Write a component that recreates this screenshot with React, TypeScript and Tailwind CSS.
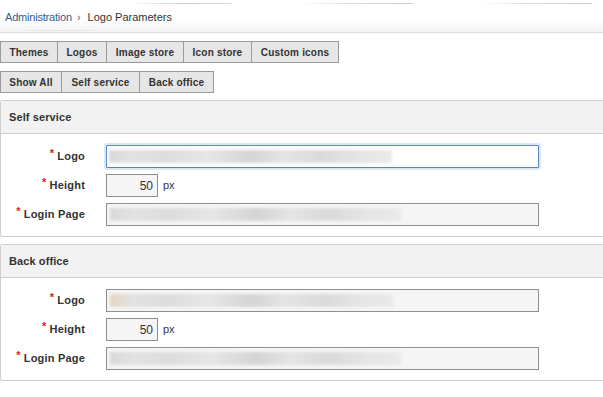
import React from 'react';

const tabs: [string, number][] = [
  ['Themes', 58],
  ['Logos', 50],
  ['Image store', 78],
  ['Icon store', 69],
  ['Custom icons', 88],
];
const filters: [string, number][] = [
  ['Show All', 62],
  ['Self service', 79],
  ['Back office', 75],
];

const Blur: React.FC<{ w: number; tint?: string }> = ({ w, tint }) => (
  <div
    className="h-[13px] blur-[1.5px]"
    style={{
      width: w,
      background: `linear-gradient(90deg, ${tint || '#d8d8d8'} 0%, #e2e2e2 8%, #dcdcdc 20%, #e6e6e6 35%, #d4d4d4 50%, #e4e4e4 62%, #dadada 75%, #e6e6e6 90%, #e9e9e9 100%)`,
    }}
  />
);

const Field: React.FC<{ label: string; children: React.ReactNode }> = ({ label, children }) => (
  <div className="flex items-center h-[23px]">
    <div className="w-[84px] text-right text-[11px] font-bold text-[#333] tracking-[0.2px]">
      <span className="text-[#e02020] text-[11px] relative -top-[3px] mr-[3px]">*</span>
      {label}
    </div>
    <div className="ml-[21px] flex items-center h-full">{children}</div>
  </div>
);

const Section: React.FC<{ title: string; focused?: boolean; logoTint?: string }> = ({ title, focused, logoTint }) => (
  <div className="border border-[#cfcfcf] border-r-0 rounded-l-[3px] w-[610px]">
    <div className="h-[33px] bg-[#f2f2f2] border-b border-[#cfcfcf] flex items-center pl-[8px] text-[11px] font-bold text-[#333] tracking-[0.1px]">
      {title}
    </div>
    <div className="pt-[11px] pb-[10px] flex flex-col gap-[6px]">
      <Field label="Logo">
        <div
          className={
            focused
              ? 'w-[433px] h-[23px] border border-[#5a86c8] bg-white rounded-[1px] shadow-[0_0_0_2px_#dce7f5] flex items-center px-[2px]'
              : 'w-[433px] h-[23px] border border-[#8e8e8e] bg-[#f5f5f5] flex items-center px-[3px]'
          }
        >
          <Blur w={283} tint={logoTint} />
        </div>
      </Field>
      <Field label="Height">
        <div className="w-[52px] h-[23px] border border-[#8e8e8e] bg-[#f5f5f5] flex items-center justify-end pr-[4px] text-[12px] text-[#333]">
          50
        </div>
        <span className="ml-[5px] text-[11px] text-[#333]">px</span>
      </Field>
      <Field label="Login Page">
        <div className="w-[433px] h-[23px] border border-[#8e8e8e] bg-[#f5f5f5] flex items-center px-[3px]">
          <Blur w={291} />
        </div>
      </Field>
    </div>
  </div>
);

const ButtonRow: React.FC<{ items: [string, number][] }> = ({ items }) => (
  <div className="flex">
    {items.map(([t, w], i) => (
      <div
        key={t}
        style={{ width: w }}
        className={`h-[22px] flex items-center justify-center bg-[#e6e6e6] border border-[#9a9a9a] text-[10px] font-bold text-[#333] tracking-[0.2px] ${
          i > 0 ? '-ml-px' : ''
        }`}
      >
        {t}
      </div>
    ))}
  </div>
);

export default function App() {
  return (
    <div className="w-[603px] h-[397px] overflow-hidden bg-white" style={{ fontFamily: '"Liberation Sans", Arial, sans-serif' }}>
      {/* Breadcrumb band */}
      <div className="relative h-[33px] border-b border-[#dcdcdc] bg-gradient-to-b from-white from-60% to-[#f3f3f3]">
        <div className="absolute top-[3px] left-[130px] w-[102px] h-px bg-gradient-to-r from-transparent via-[#cfcfcf] to-[#d8d8d8]" />
        <div className="absolute top-[3px] left-[300px] w-[113px] h-px bg-gradient-to-r from-transparent via-[#d8d8d8] to-[#cfcfcf]" />
        <div className="absolute top-[3px] left-[480px] w-[112px] h-px bg-gradient-to-r from-transparent via-[#d8d8d8] to-[#cfcfcf]" />
        <div className="absolute top-[30px] left-0 w-[118px] h-px bg-gradient-to-r from-transparent via-[#e2e2e2] to-transparent" />
        <div className="flex items-center h-[34px] pl-[5px] text-[11px]">
          <span className="text-[#2d5d95] tracking-[-0.2px]">Administration</span>
          <span className="ml-[5px] mr-[7px] text-[#888] text-[11px] font-bold">&#x203A;</span>
          <span className="text-[#333]">Logo Parameters</span>
        </div>
      </div>

      <div className="mt-[8px] flex flex-col gap-[8px]">
        <ButtonRow items={tabs} />
        <ButtonRow items={filters} />
      </div>

      <div className="mt-[7px] flex flex-col gap-[7px]">
        <Section title="Self service" focused />
        <Section title="Back office" logoTint="#e4d6c0" />
      </div>
    </div>
  );
}
